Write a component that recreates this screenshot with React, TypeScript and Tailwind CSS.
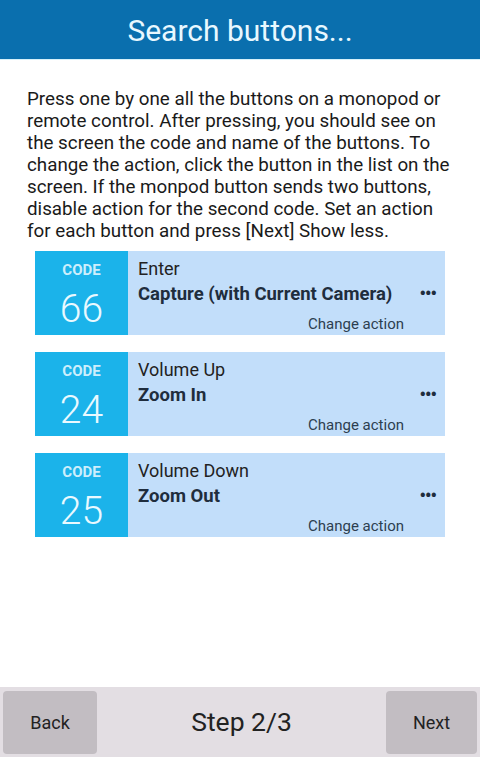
import React from 'react';

const buttons = [
  { code: 66, name: 'Enter', action: 'Capture (with Current Camera)' },
  { code: 24, name: 'Volume Up', action: 'Zoom In' },
  { code: 25, name: 'Volume Down', action: 'Zoom Out' },
];

const ButtonRow = ({ code, name, action }: { code: number; name: string; action: string }) => (
  <div className="flex h-[84px] mx-[35px]">
    <div className="w-[93px] bg-[#1bb3ea] flex flex-col items-center pt-[10px]">
      <span className="text-[15px] leading-[18px] font-bold text-[#cdeefc]">CODE</span>
      <span className="text-[39px] leading-[42px] mt-[9px] font-light text-[#eaf9ff]">{code}</span>
    </div>
    <div className="flex-1 bg-[#c2defa] pl-[10px] pt-[7px]">
      <div className="text-[18px] leading-[22px] text-[#222]">{name}</div>
      <div className="flex items-center justify-between pr-[9px] mt-[3px]">
        <span className="text-[18.5px] leading-[22px] font-bold text-[#1f2d3d]">{action}</span>
        <span className="text-[18px] leading-[22px] font-bold text-[#1f2d3d] tracking-[-1px]">•••</span>
      </div>
      <div className="text-right pr-[41px] mt-[10px] text-[15px] leading-[18px] text-[#2d3e50]">Change action</div>
    </div>
  </div>
);

export default function App() {
  return (
    <div className="h-[757px] flex flex-col bg-white font-['Roboto','Liberation_Sans',sans-serif]">
      {/* title bar */}
      <div className="h-[60px] bg-[#0a6fae] border-b border-[#d6f1fa] flex items-center justify-center pt-[3px]">
        <h1 className="text-[30px] leading-[34px] text-[#e8f8ff]">Search buttons...</h1>
      </div>

      <p className="px-[27px] pt-[28px] text-[18.8px] leading-[22px] text-[#1a1a1a]">
        Press one by one all the buttons on a monopod or remote control. After pressing, you should see on the screen
        the code and name of the buttons. To change the action, click the button in the list on the screen. If the
        monpod button sends two buttons, disable action for the second code. Set an action for each button and press
        [Next] Show less.
      </p>

      <div className="flex flex-col gap-[17px] mt-[9px]">
        {buttons.map((b) => (
          <ButtonRow key={b.code} {...b} />
        ))}
      </div>

      {/* wizard footer */}
      <div className="mt-auto h-[70px] bg-[#e3dee3] flex items-center justify-between px-[3px]">
        <button className="w-[94px] h-[63px] rounded-[4px] bg-[#c2bdc2] text-[18px] text-[#222]">Back</button>
        <span className="text-[26.5px] text-[#222]">Step 2/3</span>
        <button className="w-[91px] h-[63px] rounded-[4px] bg-[#c2bdc2] text-[18px] text-[#222]">Next</button>
      </div>
    </div>
  );
}
